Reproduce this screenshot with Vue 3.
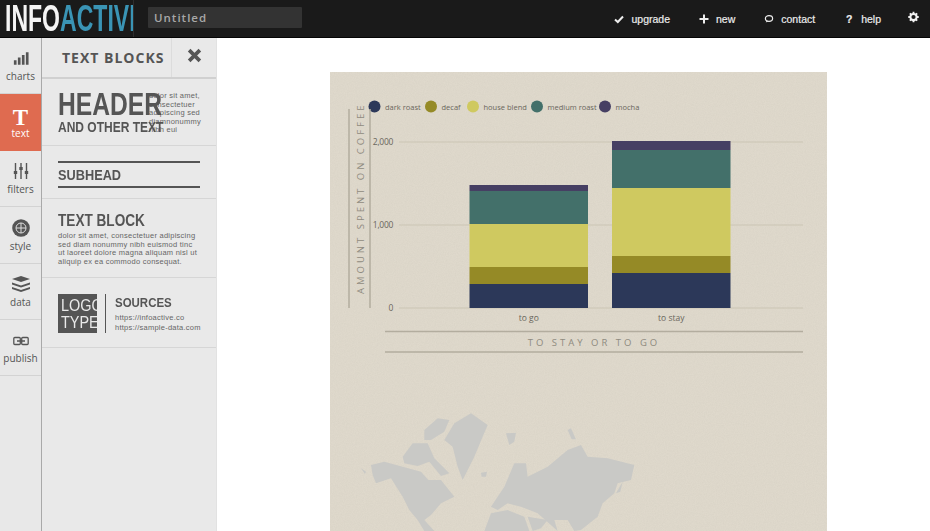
<script setup>
const rail = [
  { id: 'charts', label: 'charts' },
  { id: 'text', label: 'text', active: true },
  { id: 'filters', label: 'filters' },
  { id: 'style', label: 'style' },
  { id: 'data', label: 'data' },
  { id: 'publish', label: 'publish' }
]

const legend = [
  { label: 'dark roast', cx: 373.5, color: '#2c3859' },
  { label: 'decaf', cx: 430, color: '#958a26' },
  { label: 'house blend', cx: 472, color: '#cfc960' },
  { label: 'medium roast', cx: 536, color: '#43706a' },
  { label: 'mocha', cx: 604, color: '#463f63' }
]

const ticks = [
  { y: 142, label: '2,000' },
  { y: 225, label: '1,000' },
  { y: 308, label: '0' }
]

const bars = [
  {
    label: 'to go', x: 468.5, w: 118.5,
    parts: [[185, 191, '#463f63'], [191, 224, '#43706a'], [224, 267, '#cfc960'], [267, 284, '#958a26'], [284, 308, '#2c3859']]
  },
  {
    label: 'to stay', x: 611, w: 118.5,
    parts: [[141, 150, '#463f63'], [150, 188, '#43706a'], [188, 256, '#cfc960'], [256, 273, '#958a26'], [273, 308, '#2c3859']]
  }
]

const land = [
  '90,195 130,185 185,200 240,215 262,240 300,240 340,290 300,310 270,345 250,360 280,393 250,393 230,360 205,330 185,290 150,235 105,250 95,225',
  '310,120 340,70 390,40 440,75 425,110 400,170 365,240 350,200 335,140',
  '250,90 290,55 325,60 310,95 270,120 250,120',
  '185,170 215,130 260,130 280,175 325,220 300,228 265,185 230,198 190,190',
  '450,320 490,260 520,190 555,190 560,230 620,200 680,150 720,135 740,170 800,175 880,195 870,240 830,250 820,280 785,310 770,350 720,390 700,393 680,360 640,360 650,393 590,340 540,320 500,310 470,330',
  '430,393 450,340 500,330 550,350 565,393',
  '560,350 620,360 600,385 575,393',
  '495,100 525,98 520,125 505,135',
  '420,218 438,215 435,230 422,230',
  '680,90 690,85 705,118 692,118',
  '825,280 845,245 838,275',
  '60,205 75,215 72,222'
]
</script>

<template>
  <div class="app">
    <header class="topbar">
      <div class="brand">
        <span class="brand-text"><span class="info">INFO</span><span class="active">ACTIVE</span></span>
      </div>
      <div class="title-box">Untitled</div>
      <nav class="links">
        <a class="link">
          <svg viewBox="0 0 12 12"><path d="M2 6.5 4.8 9 10 3.5" fill="none" stroke="#eee" stroke-width="2"/></svg>
          upgrade
        </a>
        <a class="link">
          <svg viewBox="0 0 12 12"><path d="M6 1.5v9M1.5 6h9" fill="none" stroke="#eee" stroke-width="2"/></svg>
          new
        </a>
        <a class="link">
          <svg viewBox="0 0 12 12"><ellipse cx="6" cy="5.5" rx="3.6" ry="2.8" fill="none" stroke="#eee" stroke-width="1.2"/><path d="M3.6 7.5 2.8 9.6 5.4 8.2" fill="#eee"/></svg>
          contact
        </a>
        <a class="link">
          <span class="q">?</span>
          help
        </a>
        <svg class="gear" viewBox="0 0 12 12">
          <circle cx="6" cy="6" r="3.4" fill="none" stroke="#f2f2f2" stroke-width="2.2"/>
          <path d="M6 .3v2.4M6 9.3v2.4M.3 6h2.4M9.3 6h2.4M2 2l1.7 1.7M8.3 8.3 10 10M10 2 8.3 3.7M3.7 8.3 2 10" stroke="#f2f2f2" stroke-width="2"/>
        </svg>
      </nav>
    </header>

    <div class="body">
      <aside class="rail">
        <button v-for="item in rail" :key="item.id" class="rail-btn" :class="{ on: item.active }">
          <svg v-if="item.id === 'charts'" class="rail-icon" viewBox="0 0 18 16">
            <path d="M1 10h3v5H1zM5.500 7h3v8h-3zM10 4h3v11h-3zM14.500 1h3v14h-3z" fill="#555"/>
          </svg>
          <span v-else-if="item.id === 'text'" class="t-glyph">T</span>
          <svg v-else-if="item.id === 'filters'" class="rail-icon tall" viewBox="0 0 16 18">
            <path d="M2.500 1v16M8 1v16M13.500 1v16" stroke="#555" stroke-width="1.400"/>
            <path d="M.8 9h3.400v3H.8zM6.300 5h3.400v3H6.300zM11.800 9h3.400v3h-3.400z" fill="#555"/>
          </svg>
          <svg v-else-if="item.id === 'style'" class="rail-icon tall" viewBox="0 0 18 18">
            <circle cx="9" cy="9" r="8.800" fill="#555"/>
            <circle cx="9" cy="9" r="5" fill="none" stroke="#ddd" stroke-width="1"/>
            <path d="M9 4v10M4 9h10" stroke="#ddd" stroke-width="1"/>
          </svg>
          <svg v-else-if="item.id === 'data'" class="rail-icon tall" viewBox="0 0 18 16">
            <path d="M9 0 18 3 9 6 0 3z" fill="#555"/>
            <path d="M0 6.500 9 9.500 18 6.500V8.500L9 11.500 0 8.500z" fill="#555"/>
            <path d="M0 11 9 14 18 11V13L9 16 0 13z" fill="#555"/>
          </svg>
          <svg v-else class="rail-icon link-icon" viewBox="0 0 16 10">
            <rect x=".8" y="1.500" width="6.500" height="7" rx="1" fill="none" stroke="#555" stroke-width="1.300"/>
            <rect x="8.700" y="1.500" width="6.500" height="7" rx="1" fill="none" stroke="#555" stroke-width="1.300"/>
            <path d="M4 5h8" stroke="#555" stroke-width="1.500"/>
          </svg>
          <span class="rail-label">{{ item.label }}</span>
        </button>
      </aside>

      <section class="panel">
        <div class="panel-head">
          <h2>TEXT BLOCKS</h2>
          <div class="close">
            <svg viewBox="0 0 14 14"><path d="M2 2 12 12M12 2 2 12" stroke="#555" stroke-width="3.400"/></svg>
          </div>
        </div>

        <div class="block block-header">
          <div class="big">
            <div class="cond h1">HEADER</div>
            <div class="cond h1-sub">AND OTHER TEXT</div>
          </div>
          <p class="small">dolor sit amet,<br>consectetuer<br>adipiscing sed<br>diamnonummy<br>nibh eui</p>
        </div>

        <div class="block block-sub">
          <div class="sub-inner"><div class="cond h2">SUBHEAD</div></div>
        </div>

        <div class="block block-text">
          <div class="cond h3">TEXT BLOCK</div>
          <p class="small">dolor sit amet, consectetuer adipiscing<br>sed diam nonummy nibh euismod tinc<br>ut laoreet dolore magna aliquam nisl ut<br>aliquip ex ea commodo consequat.</p>
        </div>

        <div class="block block-logo">
          <div class="logo-box"><span class="cond lg">LOGO</span><span class="cond lg">TYPE</span></div>
          <div class="logo-text">
            <div class="cond h4">SOURCES</div>
            <p class="small">https://infoactive.co<br>https://sample-data.com</p>
          </div>
        </div>
      </section>

      <main class="canvas">
        <div class="poster">
          <svg class="chart" viewBox="329 72 497 459">
            <defs>
              <filter id="grain" x="0" y="0" width="100%" height="100%">
                <feTurbulence type="fractalNoise" baseFrequency="0.9" numOctaves="2" seed="4"/>
                <feColorMatrix type="matrix" values="0 0 0 0 0.45  0 0 0 0 0.42  0 0 0 0 0.36  0 0 0 0.5 -0.12"/>
              </filter>
            </defs>
            <rect x="329" y="72" width="497" height="459" filter="url(#grain)" opacity=".35"/>

            <g v-for="l in legend" :key="l.label">
              <circle :cx="l.cx" cy="106.500" r="6" :fill="l.color"/>
              <text :x="l.cx + 10.500" y="109.500" class="legend">{{ l.label }}</text>
            </g>

            <path d="M348 109V308M369 109V308" stroke="#b3ad9f" stroke-width="1.500"/>
            <text class="axis" transform="translate(362.500 294) rotate(-90)">AMOUNT SPENT ON COFFEE</text>

            <g v-for="t in ticks" :key="t.y">
              <line x1="398" x2="802" :y1="t.y" :y2="t.y" stroke="#cbc5b4" stroke-width="1"/>
              <text x="392" :y="t.y + 3" class="tick">{{ t.label }}</text>
            </g>

            <g v-for="b in bars" :key="b.label">
              <rect v-for="p in b.parts" :key="p[0]" :x="b.x" :y="p[0]" :width="b.w" :height="p[1] - p[0]" :fill="p[2]"/>
              <text :x="b.x + b.w / 2" y="321" class="cat">{{ b.label }}</text>
            </g>

            <path d="M384 331.500H802M384 352H802" stroke="#b3ad9f" stroke-width="1.500"/>
            <text x="593" y="345.500" class="xtitle">TO STAY OR TO GO</text>

            <g transform="translate(340 400) scale(.3333)" fill="#c9c9c6">
              <polygon v-for="(pts, i) in land" :key="i" :points="pts"/>
            </g>
          </svg>
        </div>
      </main>
    </div>
  </div>
</template>

<style>
html, body { margin: 0; padding: 0; background: #fff; overflow: hidden; }
</style>

<style scoped>
.app {
  width: 930px;
  height: 531px;
  display: flex;
  flex-direction: column;
  overflow: hidden;
  font-family: "Liberation Sans", Arial, sans-serif;
  color: #555;
}

.topbar {
  height: 37px;
  flex: none;
  display: flex;
  align-items: center;
  background: #1a1a1a;
  border-bottom: 1px solid #050505;
}
.brand {
  width: 133px;
  height: 100%;
  flex: none;
  border-right: 1px solid #2e2e2e;
  overflow: hidden;
}
.brand-text {
  display: block;
  width: 200px;
  font-family: "Liberation Sans Narrow", "Liberation Sans", sans-serif;
  font-weight: 700;
  font-size: 36px;
  line-height: 37px;
  margin-left: 5px;
  transform: scaleX(.64);
  transform-origin: left center;
  white-space: nowrap;
}
.info { color: #f4f4f4; }
.active { color: #3a94b5; }
.title-box {
  width: 148px;
  height: 21px;
  margin-left: 14px;
  padding-left: 6px;
  margin-top: -2px;
  background: #333;
  border-radius: 1px;
  color: #a8a8a8;
  font-family: "Open Sans", sans-serif;
  font-weight: 600;
  font-size: 11.500px;
  letter-spacing: 1px;
  line-height: 21px;
}
.links {
  margin-left: auto;
  display: flex;
  align-items: center;
  gap: 28px;
  padding-right: 11px;
}
.link {
  display: flex;
  align-items: center;
  gap: 6px;
  color: #ececec;
  font-size: 10.500px;
  font-weight: 400;
  -webkit-text-stroke: .2px #ececec;
}
.link svg { width: 12px; height: 12px; }
.q { width: 12px; text-align: center; font-weight: 700; }
.gear { width: 11px; height: 12px; margin-left: -1px; margin-top: -3px; }

.body {
  flex: 1;
  display: flex;
  min-height: 0;
}

.rail {
  width: 41px;
  flex: none;
  background: #e8e8e8;
  border-right: 1px solid #a9a9a9;
  display: flex;
  flex-direction: column;
}
.rail-btn {
  height: 56.400px;
  flex: none;
  padding: 0;
  border: 0;
  border-bottom: 1px solid #d3d3d3;
  background: transparent;
  display: flex;
  flex-direction: column;
  align-items: center;
  justify-content: flex-end;
  padding-bottom: 11px;
  box-sizing: border-box;
  color: #555;
  font-family: "Open Sans", sans-serif;
}
.rail-btn.on {
  background: #df6b50;
  color: #fff;
  border-bottom-color: #df6b50;
}
.rail-label { font-size: 10px; line-height: 12px; }
.rail-icon { width: 16px; height: 15px; margin-bottom: 4px; }
.rail-icon.tall { width: 18px; height: 18px; margin-bottom: 3px; }
.rail-icon.link-icon { height: 10px; margin-bottom: 6px; }
.t-glyph {
  font-family: "Liberation Serif", serif;
  font-weight: 700;
  font-size: 23px;
  line-height: 19px;
  color: #fff;
}

.panel {
  width: 174px;
  flex: none;
  background: #e9e9e9;
  border-right: 1px solid #e2e2e2;
}
.panel-head {
  height: 39px;
  display: flex;
  align-items: stretch;
  border-bottom: 2px solid #d0d0d0;
}
.panel-head h2 {
  width: 129px;
  margin: 0;
  padding-left: 20px;
  box-sizing: border-box;
  font-family: "Open Sans", sans-serif;
  font-weight: 700;
  font-size: 14px;
  letter-spacing: 1px;
  line-height: 40px;
  color: #555;
  white-space: nowrap;
}
.close {
  flex: 1;
  border-left: 1px solid #dcdcdc;
  display: flex;
  align-items: center;
  justify-content: center;
}
.close svg { width: 15px; height: 15px; margin-top: -4px; }

.block {
  box-sizing: border-box;
  border-bottom: 1px solid #d6d6d6;
  padding-left: 16px;
}
.cond {
  font-family: "Liberation Sans Narrow", "Liberation Sans", sans-serif;
  font-weight: 700;
  color: #555;
  white-space: nowrap;
  transform-origin: left top;
}
.small {
  margin: 0;
  font-size: 7.500px;
  line-height: 8.500px;
  letter-spacing: .25px;
  color: #666;
  white-space: nowrap;
}

.block-header {
  height: 67px;
  display: flex;
  padding-top: 11px;
}
.big { width: 91px; flex: none; }
.h1 {
  font-size: 32px;
  line-height: 29px;
  transform: scaleX(.77);
}
.h1-sub {
  font-size: 15px;
  line-height: 15px;
  margin-top: 0;
  transform: scaleX(.8);
}
.block-header .small { padding-top: 2px; }

.block-sub {
  height: 53px;
  padding: 15px 16px 0;
}
.sub-inner {
  height: 23px;
  border-top: 2px solid #555;
  border-bottom: 2px solid #555;
}
.h2 {
  font-size: 15px;
  line-height: 23px;
  transform: scaleX(.85);
}

.block-text {
  height: 79px;
  padding-top: 13px;
}
.h3 {
  font-size: 16px;
  line-height: 18px;
  margin-bottom: 2px;
  transform: scaleX(.85);
}

.block-logo {
  height: 70px;
  display: flex;
  padding-top: 16px;
}
.logo-box {
  width: 39px;
  height: 39px;
  flex: none;
  background: #555;
  display: flex;
  flex-direction: column;
  align-items: center;
  justify-content: center;
}
.lg {
  display: block;
  width: 100%;
  text-align: center;
  color: #e9e9e9;
  font-size: 17px;
  line-height: 17px;
  font-weight: 400;
  transform: scaleX(.85);
  transform-origin: center;
}
.logo-text {
  margin-left: 8px;
  padding-left: 9px;
  height: 39px;
  border-left: 1.500px solid #555;
}
.h4 {
  font-size: 13.500px;
  line-height: 17px;
  margin-bottom: 2px;
  transform: scaleX(.85);
}
.logo-text .small { line-height: 9.500px; }

.canvas {
  flex: 1;
  background: #fff;
  padding: 34px 0 0 113px;
  min-width: 0;
}
.poster {
  width: 497px;
  height: 459px;
  background: #dfd9cc;
}
.chart { display: block; width: 497px; height: 459px; }
.legend {
  font-family: "Open Sans", sans-serif;
  font-size: 7.500px;
  fill: #6a665c;
}
.axis, .xtitle {
  font-family: "Open Sans", sans-serif;
  font-size: 9.500px;
  letter-spacing: 3px;
  fill: #8f8b80;
}
.xtitle { text-anchor: middle; }
.tick {
  font-family: "Open Sans", sans-serif;
  font-size: 8.500px;
  letter-spacing: -.3px;
  text-anchor: end;
  fill: #6a665c;
}
.cat {
  font-family: "Open Sans", sans-serif;
  font-size: 8.500px;
  text-anchor: middle;
  fill: #6a665c;
}
</style>
